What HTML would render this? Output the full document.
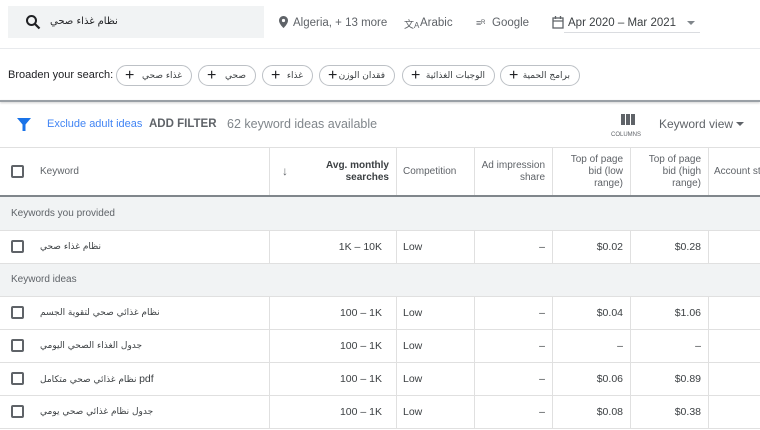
<!DOCTYPE html>
<html><head><meta charset="utf-8"><style>
*{margin:0;padding:0;box-sizing:border-box}
body{width:760px;height:430px;overflow:hidden;background:#fff;font-family:"Liberation Sans","Noto Sans CJK SC",sans-serif;color:#3c4043;position:relative;font-size:12px}
.a{position:absolute;white-space:nowrap}
.ar{font-family:"DejaVu Sans","Noto Sans CJK SC",sans-serif;font-size:9px;direction:rtl;white-space:nowrap}
.chip{position:absolute;top:65px;height:21px;border:1px solid #bdc1c6;border-radius:11px;display:flex;align-items:center;justify-content:space-between;padding:0 9px 0 8px;font-size:9px;white-space:nowrap}
.chip b{font-size:16px;font-weight:400;color:#202124;line-height:1}
.vl{position:absolute;width:1px;background:#e0e0e0}
.hl{position:absolute;left:0;width:760px;height:1px;background:#e0e0e0}
.cb{position:absolute;left:11px;width:13px;height:13px;border:2px solid #5f6368;border-radius:2px}
.r{text-align:right}
.grey{color:#5f6368}
.t{font-size:10.5px}
</style></head><body>
<div class="a" style="left:8px;top:6px;width:256px;height:32px;background:#f1f3f4"></div>
<svg class="a" style="left:25px;top:14px" width="16" height="16" viewBox="0 0 16 16"><circle cx="6.5" cy="6.5" r="4.5" fill="none" stroke="#202124" stroke-width="2"/><path d="M10 10l4.5 4.5" stroke="#202124" stroke-width="2.2"/></svg>
<div class="a ar" style="left:50px;top:16px;font-size:10px;color:#202124">نظام غذاء صحي</div>
<svg class="a" style="left:279px;top:16px" width="9" height="12" viewBox="0 0 9 12"><path d="M4.5 0C2 0 0 2 0 4.5 0 8 4.5 12 4.5 12S9 8 9 4.5C9 2 7 0 4.5 0z" fill="#5f6368"/><circle cx="4.5" cy="4.5" r="1.6" fill="#fff"/></svg>
<div class="a grey" style="left:293px;top:17px;font-size:11.5px">Algeria, + 13 more</div>
<div class="a grey" style="left:404px;top:16px;font-size:10px">文<span style="font-size:8px">A</span></div>
<div class="a grey" style="left:420px;top:17px;font-size:11.5px">Arabic</div>
<div class="a grey" style="left:476px;top:18px;font-size:9px">≡ᴿ</div>
<div class="a grey" style="left:492px;top:17px;font-size:11.5px">Google</div>
<svg class="a" style="left:552px;top:16px" width="12" height="13" viewBox="0 0 12 13"><rect x="1" y="2" width="10" height="10" fill="none" stroke="#5f6368" stroke-width="1.3"/><path d="M1 5h10M3.5 0v3M8.5 0v3" stroke="#5f6368" stroke-width="1.3"/></svg>
<div class="a" style="left:568px;top:17px;color:#3c4043;font-size:11.5px">Apr 2020 – Mar 2021</div>
<div class="a" style="left:687px;top:21px;border-left:4px solid transparent;border-right:4px solid transparent;border-top:4px solid #80868b"></div>
<div class="a" style="left:564px;top:32px;width:136px;height:1px;background:#dadce0"></div>
<div class="hl" style="top:48px;background:#e8eaed"></div>
<div class="a" style="left:8px;top:69px;color:#202124;font-size:11px">Broaden your search:</div>
<div class="chip" style="left:116px;width:76px"><b>+</b><span class="ar">غذاء صحي</span></div>
<div class="chip" style="left:198px;width:58px"><b>+</b><span class="ar">صحي</span></div>
<div class="chip" style="left:262px;width:51px"><b>+</b><span class="ar">غذاء</span></div>
<div class="chip" style="left:319px;width:76px"><b>+</b><span class="ar">فقدان الوزن</span></div>
<div class="chip" style="left:402px;width:93px"><b>+</b><span class="ar">الوجبات الغذائية</span></div>
<div class="chip" style="left:500px;width:80px"><b>+</b><span class="ar">برامج الحمية</span></div>
<div class="hl" style="top:100px;height:2px;background:#9aa0a6;box-shadow:0 1px 2px rgba(0,0,0,.2)"></div>
<svg class="a" style="left:17px;top:118px" width="14" height="13" viewBox="0 0 14 13"><path d="M0 0h14L8.5 6.5V13H5.5V6.5z" fill="#1a73e8"/></svg>
<div class="a" style="left:47px;top:118px;color:#4285f4;font-size:11px">Exclude adult ideas</div>
<div class="a" style="left:149px;top:118px;color:#5f6368;font-weight:bold;font-size:11.5px">ADD FILTER</div>
<div class="a" style="left:227px;top:117px;color:#80868b;font-size:12.5px">62 keyword ideas available</div>
<div class="a" style="left:621px;top:114px;width:14px;height:11px;background:repeating-linear-gradient(90deg,#5f6368 0 4px,transparent 4px 5px)"></div>
<div class="a" style="left:611px;top:132px;font-size:6px;color:#5f6368">COLUMNS</div>
<div class="a" style="left:659px;top:117px;color:#5f6368;font-size:12px">Keyword view</div>
<div class="a" style="left:736px;top:122px;border-left:4px solid transparent;border-right:4px solid transparent;border-top:4px solid #5f6368"></div>
<div class="hl" style="top:147px"></div>
<div class="cb" style="top:165px"></div>
<div class="a grey" style="left:40px;top:166px;font-size:10px">Keyword</div>
<div class="a grey" style="left:282px;top:164px;font-size:12px">↓</div>
<div class="a r" style="left:300px;top:160px;width:89px;font-size:10px;font-weight:bold;color:#3c4043;line-height:12px">Avg. monthly<br>searches</div>
<div class="a grey" style="left:403px;top:166px;font-size:10px">Competition</div>
<div class="a r grey" style="left:474px;top:160px;width:71px;font-size:10px;line-height:12px">Ad impression<br>share</div>
<div class="a r grey" style="left:552px;top:154px;width:71px;font-size:10px;line-height:12px">Top of page<br>bid (low<br>range)</div>
<div class="a r grey" style="left:630px;top:154px;width:71px;font-size:10px;line-height:12px">Top of page<br>bid (high<br>range)</div>
<div class="a grey" style="left:714px;top:166px;font-size:10px">Account st</div>
<div class="vl" style="left:269px;top:147px;height:48px"></div>
<div class="hl" style="top:195px;height:2px;background:#80868b"></div>
<div class="a" style="left:0;top:197px;width:760px;height:33px;background:#f1f3f4"></div>
<div class="a grey" style="left:11px;top:208px;font-size:10px">Keywords you provided</div>
<div class="hl" style="top:230px"></div>
<div class="a" style="left:0;top:263px;width:760px;height:33px;background:#f1f3f4"></div>
<div class="a grey" style="left:11px;top:274px;font-size:10px">Keyword ideas</div>
<div class="hl" style="top:263px"></div>
<div class="hl" style="top:296px"></div>
<div class="hl" style="top:329px"></div>
<div class="hl" style="top:362px"></div>
<div class="hl" style="top:395px"></div>
<div class="hl" style="top:428px"></div>
<div class="vl" style="left:396px;top:147px;height:48px"></div><div class="vl" style="left:474px;top:147px;height:48px"></div><div class="vl" style="left:552px;top:147px;height:48px"></div><div class="vl" style="left:630px;top:147px;height:48px"></div><div class="vl" style="left:708px;top:147px;height:48px"></div>
<div class="vl" style="left:269px;top:230px;height:33px"></div><div class="vl" style="left:396px;top:230px;height:33px"></div><div class="vl" style="left:474px;top:230px;height:33px"></div><div class="vl" style="left:552px;top:230px;height:33px"></div><div class="vl" style="left:630px;top:230px;height:33px"></div><div class="vl" style="left:708px;top:230px;height:33px"></div>
<div class="vl" style="left:269px;top:296px;height:132px"></div><div class="vl" style="left:396px;top:296px;height:132px"></div><div class="vl" style="left:474px;top:296px;height:132px"></div><div class="vl" style="left:552px;top:296px;height:132px"></div><div class="vl" style="left:630px;top:296px;height:132px"></div><div class="vl" style="left:708px;top:296px;height:132px"></div>

<div class="cb" style="top:240px"></div><div class="a ar" style="left:40px;top:242px">نظام غذاء صحي</div>
<div class="a r t" style="left:300px;top:241px;width:82px">1K – 10K</div>
<div class="a t" style="left:403px;top:241px">Low</div>
<div class="a r t" style="left:474px;top:241px;width:71px">–</div>
<div class="a r t" style="left:552px;top:241px;width:71px">$0.02</div>
<div class="a r t" style="left:630px;top:241px;width:71px">$0.28</div>

<div class="cb" style="top:306px"></div><div class="a ar" style="left:40px;top:308px">نظام غذائي صحي لتقوية الجسم</div>
<div class="a r t" style="left:300px;top:307px;width:82px">100 – 1K</div>
<div class="a t" style="left:403px;top:307px">Low</div>
<div class="a r t" style="left:474px;top:307px;width:71px">–</div>
<div class="a r t" style="left:552px;top:307px;width:71px">$0.04</div>
<div class="a r t" style="left:630px;top:307px;width:71px">$1.06</div>

<div class="cb" style="top:339px"></div><div class="a ar" style="left:40px;top:341px">جدول الغذاء الصحي اليومي</div>
<div class="a r t" style="left:300px;top:340px;width:82px">100 – 1K</div>
<div class="a t" style="left:403px;top:340px">Low</div>
<div class="a r t" style="left:474px;top:340px;width:71px">–</div>
<div class="a r t" style="left:552px;top:340px;width:71px">–</div>
<div class="a r t" style="left:630px;top:340px;width:71px">–</div>

<div class="cb" style="top:372px"></div><div class="a" style="left:40px;top:373px;font-size:9px"><span class="ar">نظام غذائي صحي متكامل</span> <span style="font-size:10.5px">pdf</span></div>
<div class="a r t" style="left:300px;top:373px;width:82px">100 – 1K</div>
<div class="a t" style="left:403px;top:373px">Low</div>
<div class="a r t" style="left:474px;top:373px;width:71px">–</div>
<div class="a r t" style="left:552px;top:373px;width:71px">$0.06</div>
<div class="a r t" style="left:630px;top:373px;width:71px">$0.89</div>

<div class="cb" style="top:405px"></div><div class="a ar" style="left:40px;top:407px">جدول نظام غذائي صحي يومي</div>
<div class="a r t" style="left:300px;top:406px;width:82px">100 – 1K</div>
<div class="a t" style="left:403px;top:406px">Low</div>
<div class="a r t" style="left:474px;top:406px;width:71px">–</div>
<div class="a r t" style="left:552px;top:406px;width:71px">$0.08</div>
<div class="a r t" style="left:630px;top:406px;width:71px">$0.38</div>
</body></html>
